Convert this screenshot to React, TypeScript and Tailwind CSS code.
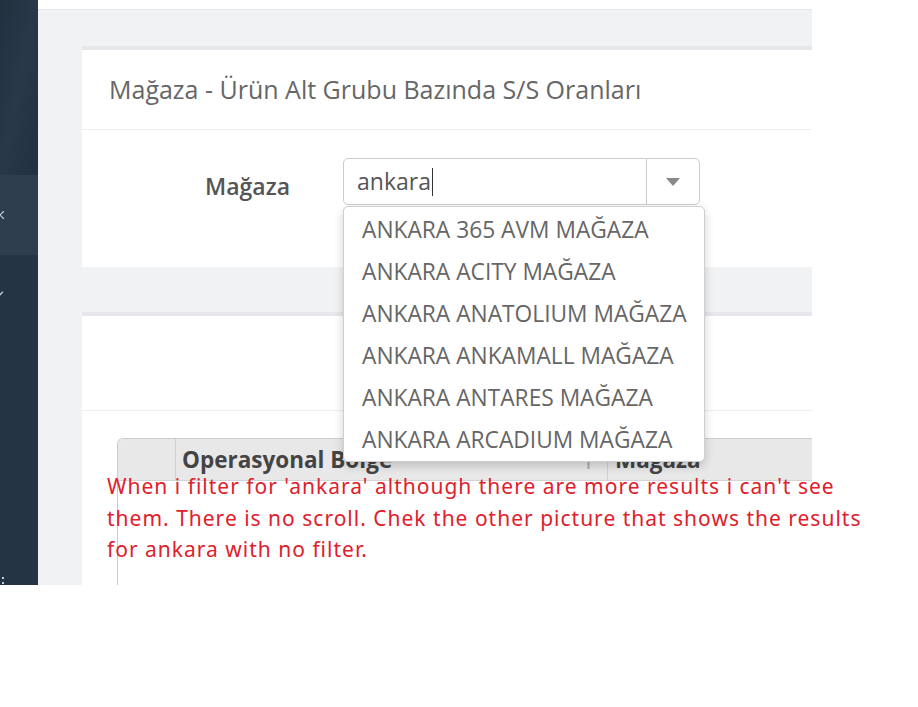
import { ChevronDown, X } from "lucide-react";

const stores = [
  "ANKARA 365 AVM MAĞAZA",
  "ANKARA ACITY MAĞAZA",
  "ANKARA ANATOLIUM MAĞAZA",
  "ANKARA ANKAMALL MAĞAZA",
  "ANKARA ANTARES MAĞAZA",
  "ANKARA ARCADIUM MAĞAZA",
];

function Sidebar() {
  return (
    <aside className="w-[38px] shrink-0 flex flex-col bg-[#253444] text-[#c5ccd4] overflow-hidden">
      <div className="h-[175px] shrink-0 bg-gradient-to-br from-[#223140] via-[#283849] to-[#223140]" />
      <div className="h-[80px] shrink-0 bg-[#2f3e4f] flex items-center -ml-[7px]">
        <X size={14} strokeWidth={2} />
      </div>
      <div className="flex-1 flex flex-col justify-between -ml-[8px] pt-[32px]">
        <ChevronDown size={14} strokeWidth={2.5} />
        <div className="ml-[10px] flex flex-col gap-[3px] pb-px">
          <span className="w-[2px] h-[2px] bg-[#c5ccd4]" />
          <span className="w-[2px] h-[2px] bg-[#c5ccd4]" />
        </div>
      </div>
    </aside>
  );
}

function StoreSelect() {
  return (
    <div className="relative w-[357px]">
      <div className="h-[47px] flex rounded-[5px] border border-[#cccccc] bg-white">
        <div className="flex-1 flex items-center pl-[13px] text-[23px] text-[#555]">
          ankara<span className="w-px h-[28px] bg-[#333] ml-px" />
        </div>
        <div className="w-[53px] border-l border-[#cccccc] flex items-center justify-center">
          <svg width="14" height="8" viewBox="0 0 14 8">
            <path d="M0 0h14L7 8z" fill="#888" />
          </svg>
        </div>
      </div>
      <ul className="absolute left-0 top-[48px] w-[362px] z-10 rounded-[5px] border border-[#cfcfcf] bg-white pt-[2px] shadow-[0_4px_10px_rgba(0,0,0,0.18)]">
        {stores.map((s) => (
          <li key={s} className="h-[42px] flex items-center pl-[18px] text-[22.75px] text-[#666] whitespace-nowrap">
            {s}
          </li>
        ))}
      </ul>
    </div>
  );
}

export default function App() {
  return (
    <div className="relative w-[918px] h-[707px] bg-white font-['Open_Sans',sans-serif]">
      <div className="flex w-[812px] h-[585px] overflow-hidden">
        <Sidebar />
        <main className="flex-1 flex flex-col bg-[#f1f2f4]">
          <div className="h-[10px] shrink-0 bg-white border-b border-[#e4e6e9]" />
          <div className="pl-[44px] pt-[36px] flex flex-col shrink-0">
            <section className="border-t-4 border-[#e5e7ea] bg-white">
              <div className="h-[80px] flex items-center pl-[27px] border-b border-[#eeeeee]">
                <h2 className="text-[25px] text-[#666] whitespace-nowrap">
                  Mağaza - Ürün Alt Grubu Bazında S/S Oranları
                </h2>
              </div>
              <div className="h-[137px] flex items-start pt-[28px]">
                <label className="w-[261px] h-[47px] flex items-center justify-end pr-[53px] pt-[9px] text-[23px] font-semibold text-[#555]">
                  Mağaza
                </label>
                <StoreSelect />
              </div>
            </section>
            <section className="mt-[45px] border-t-4 border-[#e5e7ea] bg-white h-[300px]">
              <div className="h-[95px] border-b border-[#eeeeee]" />
              <div className="pl-[35px] pt-[27px]">
                <div className="h-[200px] border-l border-t border-[#cccccc] rounded-tl-[6px]">
                  <div className="h-[42px] flex bg-[#e8e8e8] border-b border-[#d4d4d4] rounded-tl-[6px] text-[22.5px] font-bold text-[#444]">
                    <div className="w-[58px] border-r border-[#d0d0d0]" />
                    <div className="w-[432px] flex items-center pl-[6px] border-r border-[#d0d0d0] relative whitespace-nowrap">
                      Operasyonal Bolge
                      <svg className="absolute right-[14px] top-[18px]" width="9" height="12" viewBox="0 0 9 12">
                        <path d="M0 0h9L5.5 5v7h-2V5z" fill="#aaa" />
                      </svg>
                    </div>
                    <div className="flex-1 flex items-center pl-[7px] whitespace-nowrap">Mağaza</div>
                  </div>
                </div>
              </div>
            </section>
          </div>
        </main>
      </div>
      <p className="absolute left-[107px] top-[471px] w-[775px] text-[21px] leading-[31.5px] text-[#e0202b] font-['Noto_Sans',sans-serif] tracking-[1px]">
        When i filter for 'ankara' although there are more results i can't see them. There is no scroll. Chek the other picture that shows the results for ankara with no filter.
      </p>
    </div>
  );
}
